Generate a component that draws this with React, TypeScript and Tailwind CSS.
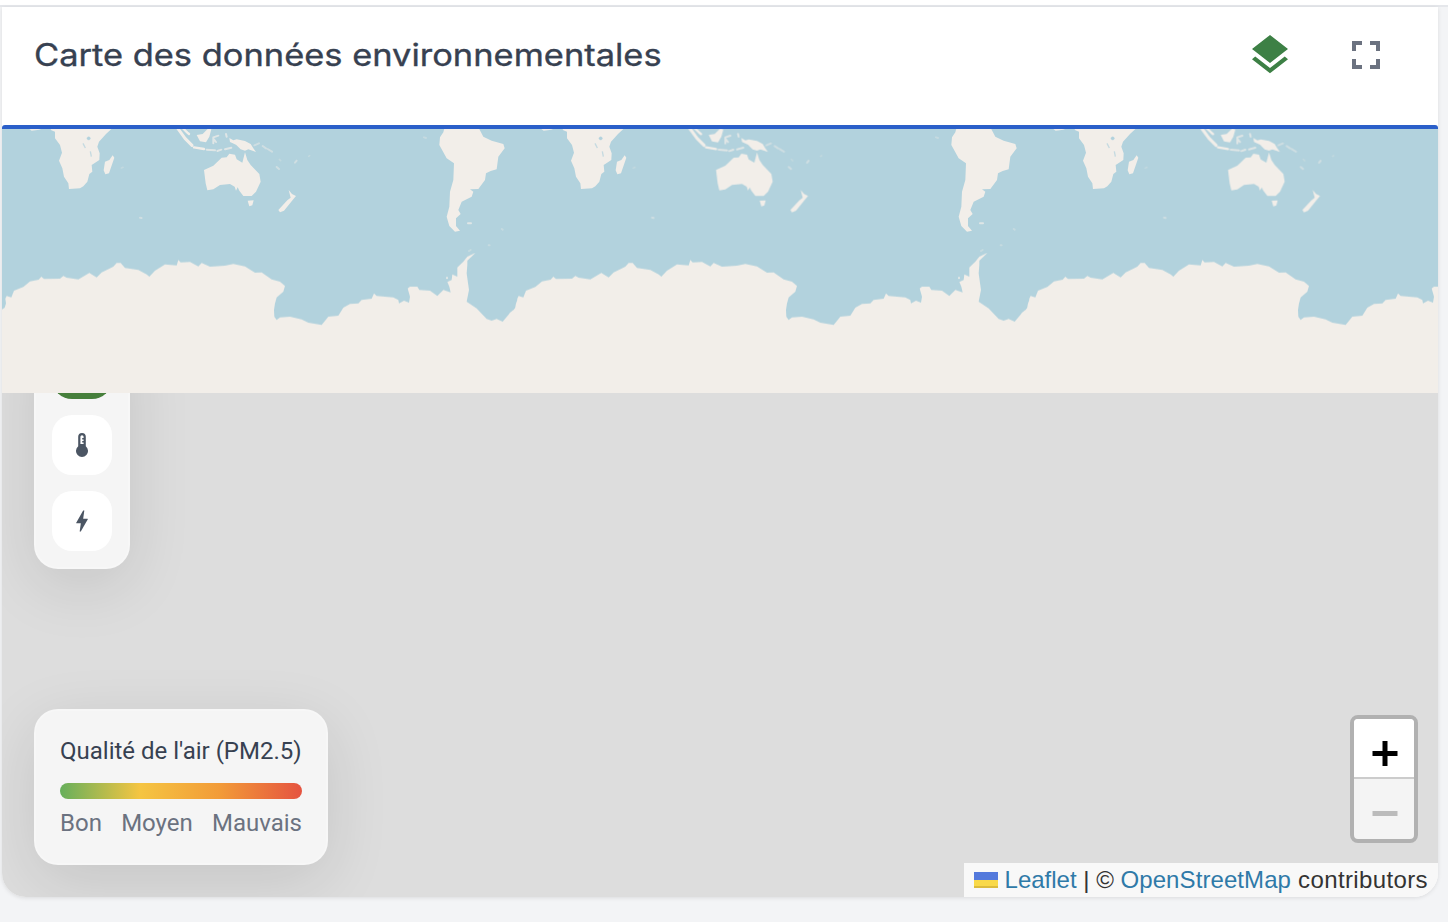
import React from "react";
import { MdBolt, MdFullscreen, MdLayers } from "react-icons/md";

const ANTARCTICA =
  "M6 208L14 203 18 190 16 176 20 168 34 172 42 152 70 141 90 124 116 119 124 110 132 117 180 116 190 108 200 113 235 118 268 99 290 112 305 97 340 80 350 69 362 69 375 84 415 90 440 103 448 110 465 92 495 73 530 76 535 60 542 67 570 66 595 79 605 69 630 80 675 77 700 72 735 79 765 98 785 97 815 118 840 125 855 138 850 155 830 172 825 190 822 210 823 230 830 240 840 232 870 230 905 238 925 248 965 255 985 230 1015 227 1030 203 1050 192 1075 190 1085 180 1115 176 1122 160 1130 168 1180 172 1195 180 1197 190 1212 182 1227 188 1230 170 1223 145 1230 140 1252 140 1258 150 1290 152 1312 168 1330 150 1352 157 1348 140 1342 126 1355 120 1357 103 1372 110 1372 82 1390 65 1402 50 1427 38 1402 62 1402 75 1400 100 1407 150 1400 185 1430 205 1460 237 1475 242 1490 237 1508 245 1525 225 1530 218 1545 206 1548 190 1556 170V470H6Z";

function World() {
  return (
    <g id="world" fill="#f2eee9" stroke="none">
      <g transform="translate(0 120) scale(.333333)">
        <path d="M84 24H130L118 29 95 32Z" />
        <path d="M148 22L154 31 165 35 165 55 180 75 186 98 177 122 187 145 192 170 205 190 207 207 240 205 250 199 262 185 268 162 277 155 275 135 298 120 299 100 292 80 297 65 318 42 340 22Z" />
        <path d="M338 106L343 113 327 160 316 163 311 151 315 125 328 120Z" />
        <g fill="#b2d2dd" stroke="#b2d2dd">
          <circle cx="266" cy="55" r="5" />
          <path d="M249 70L256 84M271 94L274 110" strokeWidth="4" fill="none" opacity=".7" />
        </g>
        <path d="M612 150L640 137 665 113 680 112 688 101 705 104 710 118 727 128 735 97 742 120 752 135 778 162 782 185 768 215 755 228 730 228 718 212 713 202 708 212 704 200 690 192 660 195 640 208 622 211 617 190Z" />
        <path d="M743 242L761 241 757 256 748 259Z" />
        <path d="M866 210L876 222 888 228 878 240 852 272 840 277 835 270 862 241 872 233Z" />
        <path d="M590 45L608 42 625 25 634 28 628 50 618 67 600 64Z" />
        <path d="M688 54L700 61 710 58 735 63 752 72 760 85 768 96 745 88 735 92 722 88 708 74 690 66Z" />
        <g fill="none" stroke="#f2eee9" strokeLinecap="round" strokeLinejoin="round">
          <path d="M534 26L555 55 576 76" strokeWidth="9" />
          <path d="M548 24L562 38 567 42" strokeWidth="7" />
          <path d="M582 82L612 87" strokeWidth="7" />
          <path d="M620 89L645 91M652 93L664 89M675 88L694 83M640 70L640 52 655 47M640 56L648 66M678 42L680 50" strokeWidth="6" opacity=".7" />
          <path d="M763 76L777 70M788 78L798 85M803 87L816 95M830 141L837 147M885 128L890 122M420 293L425 294" strokeWidth="6" opacity=".45" />
          <path d="M364 144L369 142M926 109L929 107M838 118L842 122M470 25H474" strokeWidth="5" opacity=".25" />
        </g>
      </g>
      <g transform="translate(400 120) scale(.333333)">
        <path d="M134 22L130 37 120 52 118 75 140 115 162 130 160 180 150 215 148 260 140 290 148 318 165 335 180 332 168 318 168 295 182 282 175 270 185 245 215 230 220 215 210 208 235 207 255 180 258 160 272 153 290 148 295 110 314 85 310 72 275 62 250 50 235 22Z" />
        <g fill="none" stroke="#f2eee9" strokeLinecap="round" strokeWidth="6">
          <path d="M204 310H213" opacity=".7" />
          <path d="M305 327L308 329M72 52L78 54M207 393L212 390M266 376H269" opacity=".3" />
        </g>
      </g>
      <g transform="translate(0 240) scale(.333333)">
        <path d={ANTARCTICA} />
        <circle cx="1341" cy="114" r="3" />
      </g>
    </g>
  );
}

function MapTiles() {
  return (
    <svg className="block h-[264px] w-full shrink-0 bg-[#b2d2dd]" viewBox="2 129 1436 264" aria-hidden="true">
      <defs>
        <filter id="soften" x="-5%" y="-5%" width="110%" height="110%" colorInterpolationFilters="sRGB">
          <feGaussianBlur stdDeviation=".75" />
        </filter>
      </defs>
      <g filter="url(#soften)">
        <World />
        <use href="#world" x="512" />
        <use href="#world" x="1024" />
      </g>
      <rect x="2" y="340" width="1436" height="53" fill="#f2eee9" />
    </svg>
  );
}

function Thermometer() {
  return (
    <svg className="h-6 w-3" viewBox="0 0 12 24" fill="none">
      <path d="M6 0a3.8 3.8 0 0 0-3.8 3.8v9.5a6 6 0 1 0 7.6 0V3.8A3.800 3.800 0 0 0 6 0Z" fill="#4b5563" />
      <path d="M6 2.200A1.600 1.600 0 0 0 4.400 3.800V11h3.200V9.500H6.200V8h1.400V6.500H6.200V5h1.400V3.800A1.600 1.600 0 0 0 6 2.200Z" fill="#fff" />
    </svg>
  );
}

const toolButton = "flex size-[60px] shrink-0 items-center justify-center rounded-[20px] bg-white text-[#4b5563]";

export default function App() {
  return (
    <div className="flex h-[922px] w-[1448px] flex-col overflow-hidden bg-[#f3f4f6] font-['Roboto',sans-serif]">
      <div className="h-[7px] shrink-0 border-b-2 border-[#e5e7eb] bg-white" />
      <section className="mr-[10px] ml-[2px] flex h-[890px] flex-col overflow-hidden rounded-b-[24px] bg-white shadow-[0_1px_4px_rgba(0,0,0,0.1)]">
        <header className="flex h-[118px] shrink-0 items-start justify-between pt-6 pr-12 pl-8">
          <h1 className="origin-left scale-x-[1.111] font-['Inter',sans-serif] text-[31px] leading-12 font-normal whitespace-nowrap text-[#374151] [-webkit-text-stroke:0.35px_#374151]">
            Carte des données environnementales
          </h1>
          <div className="flex gap-12">
            <button aria-label="Couches" className="text-[#3d8045]"><MdLayers className="size-12" /></button>
            <button aria-label="Plein écran" className="text-[#6b7280]"><MdFullscreen className="size-12" /></button>
          </div>
        </header>
        <div className="h-1 shrink-0 rounded-t-[3px] bg-[#2a5fc9]" />
        <MapTiles />
        <div className="flex h-[504px] items-stretch justify-between overflow-hidden bg-[#ddd]">
          <div className="flex flex-col items-start justify-between pb-8 pl-8">
            <div className="-mt-[72px] flex h-[248px] w-24 flex-col items-center gap-4 rounded-[24px] border-2 border-white/20 bg-[#f5f5f5] pt-4 shadow-[0_16px_64px_rgba(0,0,0,0.11)]">
              <div className="size-[60px] shrink-0 rounded-[20px] bg-[#467f3b]" />
              <button aria-label="Température" className={toolButton}><Thermometer /></button>
              <button aria-label="Énergie" className={toolButton}><MdBolt className="size-7" /></button>
            </div>
            <div className="flex h-[156px] w-[294px] flex-col rounded-[24px] border-2 border-white/20 bg-[#f5f5f5] px-6 pt-6 shadow-[0_16px_64px_rgba(0,0,0,0.11)]">
              <div className="text-2xl leading-8 whitespace-nowrap text-[#374151]">Qualité de l'air (PM2.5)</div>
              <div className="mt-4 h-4 shrink-0 rounded-full bg-[linear-gradient(90deg,#66af5b_0%,#f5c542_33%,#f29b38_66%,#e55340_100%)]" />
              <div className="mt-2 flex justify-between text-2xl leading-8 text-[#6b7280]">
                <span>Bon</span>
                <span>Moyen</span>
                <span>Mauvais</span>
              </div>
            </div>
          </div>
          <div className="flex flex-col items-end justify-end gap-5">
            <div className="mr-5 flex h-32 w-[68px] flex-col overflow-hidden rounded-lg border-4 border-[#b1b1b1] bg-[#f4f4f4]">
              <button aria-label="Zoom avant" className="flex h-[60px] shrink-0 items-center justify-center border-b-2 border-[#ccc] bg-white">
                <svg className="mt-3 ml-0.5 size-[26px]" viewBox="0 0 26 26"><path d="M13 0v25M.5 12.500h25" stroke="#000" strokeWidth="5" /></svg>
              </button>
              <button aria-label="Zoom arrière" className="flex h-[60px] shrink-0 items-center justify-center">
                <svg className="mt-2 ml-0.5 size-[26px]" viewBox="0 0 26 26"><path d="M.5 13.500h25" stroke="#bbb" strokeWidth="5" /></svg>
              </button>
            </div>
            <div className="flex h-[34px] items-center bg-white/80 px-2.5 font-['Liberation_Sans',sans-serif] text-2xl whitespace-pre text-[#333]">
              <svg className="mr-[7px] h-4 w-6" viewBox="0 0 24 16">
                <path fill="#5379dc" d="M0 0h24v8H0z" />
                <path fill="#f9d949" d="M0 8h24v6H0z" />
                <path fill="#dcbb3c" d="M0 14h24v2H0z" />
              </svg>
              <a className="text-[#2f7aa8]">Leaflet</a>
              <span> | © </span>
              <a className="tracking-[0.08px] text-[#2f7aa8]">OpenStreetMap</a>
              <span className="tracking-[0.38px]"> contributors</span>
            </div>
          </div>
        </div>
      </section>
    </div>
  );
}
